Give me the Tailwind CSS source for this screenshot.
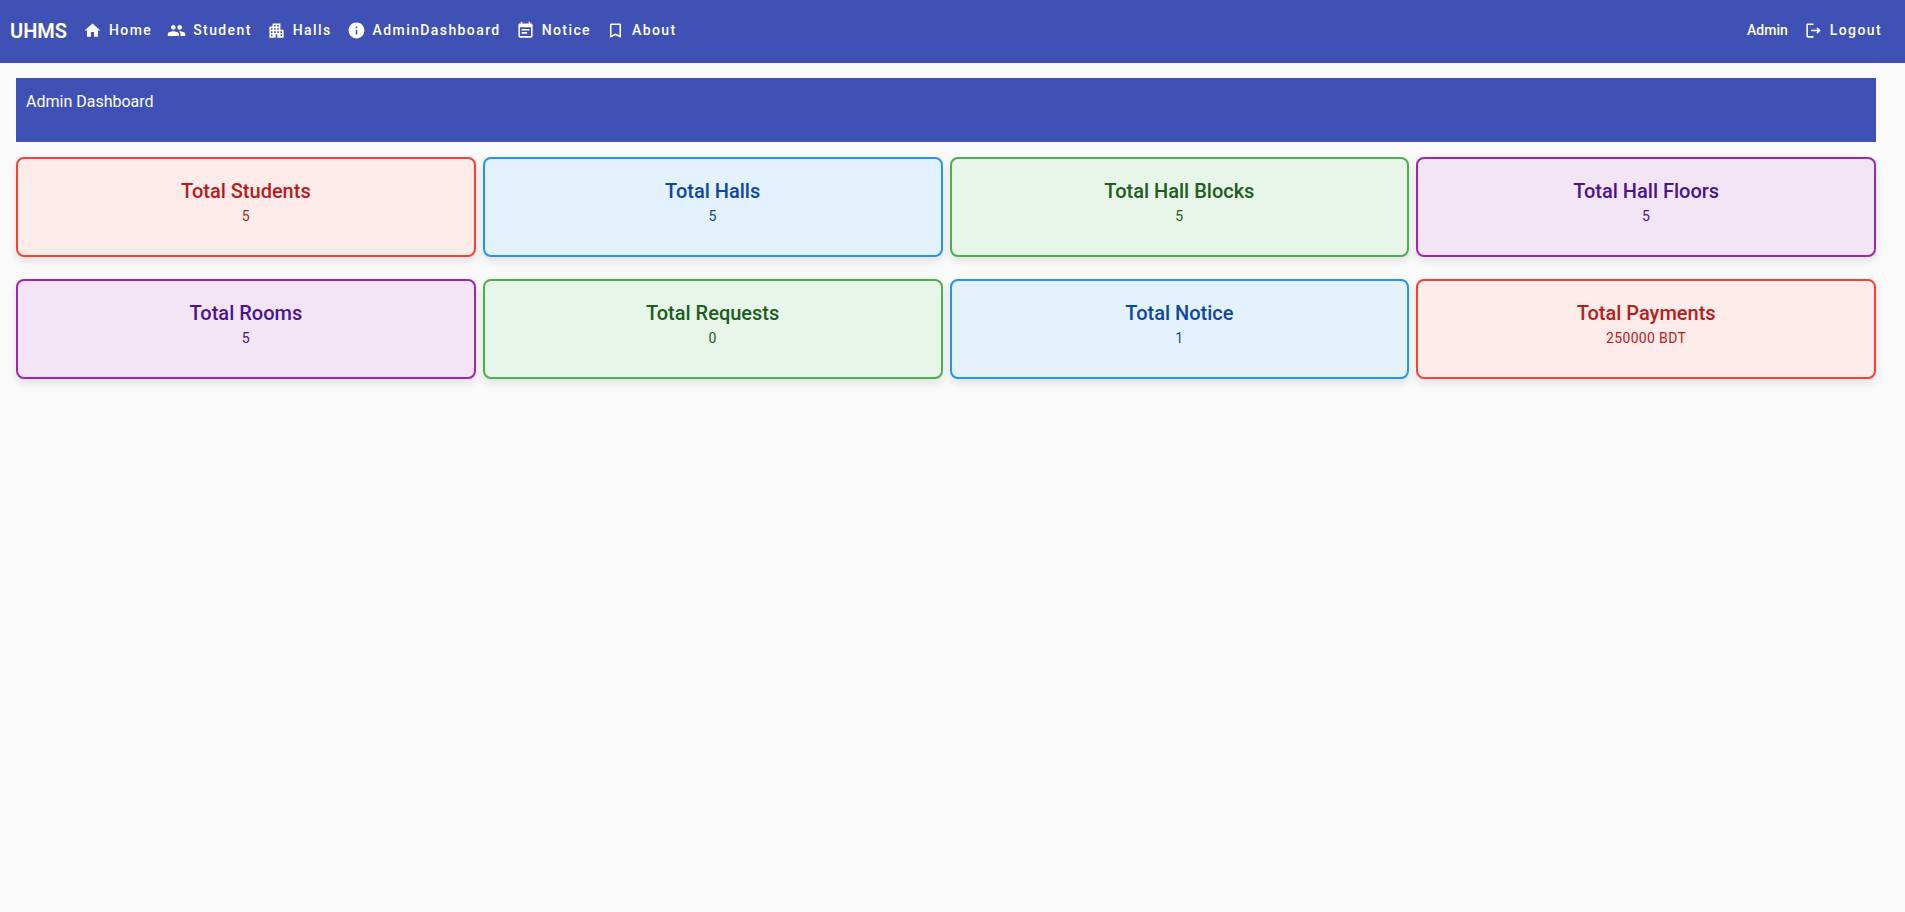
<!DOCTYPE html>
<html lang="en">
<head>
<meta charset="utf-8">
<meta name="viewport" content="width=device-width, initial-scale=1">
<title>UHMS - Admin Dashboard</title>
<script src="https://cdn.jsdelivr.net/npm/@tailwindcss/browser@4"></script>
</head>
<body class="min-h-screen bg-[#fafafa] font-[Roboto,sans-serif]">
<header class="flex min-h-[63px] flex-wrap items-center justify-between bg-[#3f51b5] pr-4 pb-0.5 pl-[10px] text-sm font-medium text-white">
  <div class="flex flex-wrap items-center">
    <a href="#" class="mr-2 text-xl font-semibold">UHMS</a>
    <nav class="flex flex-wrap items-center tracking-widest">
      <a href="#" class="flex items-center gap-[7px] pr-[7px] pl-2"><svg class="size-[19px] fill-current" viewBox="0 0 24 24" aria-hidden="true"><path d="M10 20v-6h4v6h5v-8h3L12 3 2 12h3v8z"/></svg><span class="pb-0.5">Home</span></a>
      <a href="#" class="flex items-center gap-[7px] pr-[7px] pl-2"><svg class="size-[19px] fill-current" viewBox="0 0 24 24" aria-hidden="true"><path d="M16 11c1.66 0 2.99-1.34 2.99-3S17.66 5 16 5c-1.66 0-3 1.34-3 3s1.34 3 3 3zm-8 0c1.66 0 2.99-1.34 2.99-3S9.66 5 8 5C6.34 5 5 6.34 5 8s1.34 3 3 3zm0 2c-2.33 0-7 1.17-7 3.5V19h14v-2.5c0-2.33-4.67-3.5-7-3.5zm8 0c-.29 0-.62.02-.97.05 1.16.84 1.97 1.97 1.97 3.45V19h6v-2.5c0-2.33-4.67-3.5-7-3.5z"/></svg><span class="pb-0.5">Student</span></a>
      <a href="#" class="flex items-center gap-[7px] pr-[7px] pl-2"><svg class="size-[19px] fill-current" viewBox="0 0 24 24" aria-hidden="true"><path d="M17 11V3H7v4H3v14h8v-4h2v4h8V11h-4zM7 19H5v-2h2v2zm0-4H5v-2h2v2zm0-4H5V9h2v2zm4 4H9v-2h2v2zm0-4H9V9h2v2zm0-4H9V5h2v2zm4 8h-2v-2h2v2zm0-4h-2V9h2v2zm0-4h-2V5h2v2zm4 12h-2v-2h2v2zm0-4h-2v-2h2v2z"/></svg><span class="pb-0.5">Halls</span></a>
      <a href="#" class="flex items-center gap-[7px] pr-[7px] pl-2"><svg class="size-[19px] fill-current" viewBox="0 0 24 24" aria-hidden="true"><path d="M12 2C6.48 2 2 6.48 2 12s4.48 10 10 10 10-4.48 10-10S17.52 2 12 2zm1 15h-2v-6h2v6zm0-8h-2V7h2v2z"/></svg><span class="pb-0.5">AdminDashboard</span></a>
      <a href="#" class="flex items-center gap-[7px] pr-[7px] pl-2"><svg class="size-[19px] fill-current" viewBox="0 0 24 24" aria-hidden="true"><path d="M17 10H7v2h10v-2zm2-7h-1V1h-2v2H8V1H6v2H5c-1.11 0-1.99.9-1.99 2L3 19c0 1.1.89 2 2 2h14c1.1 0 2-.9 2-2V5c0-1.1-.9-2-2-2zm0 16H5V8h14v11zm-5-5H7v2h7v-2z"/></svg><span class="pb-0.5">Notice</span></a>
      <a href="#" class="flex items-center gap-[7px] pr-[7px] pl-2"><svg class="size-[19px] fill-current" viewBox="0 0 24 24" aria-hidden="true"><path d="M17 3H7c-1.1 0-1.99.9-1.99 2L5 21l7-3 7 3V5c0-1.1-.9-2-2-2zm0 15l-5-2.18L7 18V5h10v13z"/></svg><span class="pb-0.5">About</span></a>
    </nav>
  </div>
  <div class="flex items-center">
    <span class="px-2 pb-0.5">Admin</span>
    <button type="button" class="flex items-center gap-[7px] pr-[7px] pl-2 tracking-widest"><svg class="size-[19px] fill-current" viewBox="0 0 24 24" aria-hidden="true"><path d="M17 8l-1.41 1.41L17.17 11H9v2h8.17l-1.58 1.58L17 16l4-4zM5 5h7V3H5c-1.1 0-2 .9-2 2v14c0 1.1.9 2 2 2h7v-2H5V5z"/></svg><span class="pb-0.5">Logout</span></button>
  </div>
</header>
<main class="mt-[15px] mr-[29px] ml-4">
  <h1 class="min-h-16 bg-[#3f51b5] px-[10px] py-3 text-base text-white">Admin Dashboard</h1>
  <div class="mt-[15px] grid grid-cols-1 gap-x-[7px] gap-y-[22px] text-center sm:grid-cols-2 lg:grid-cols-4">
    <section class="min-h-[100px] rounded-lg border-2 border-[#f44336] bg-[#feeceb] px-4 pt-4 text-[#b71c1c] shadow-[0_4px_8px_rgba(0,0,0,0.1)]"><h2 class="text-xl leading-8 font-medium">Total Students</h2><p class="text-sm leading-[18px] tracking-wide">5</p></section>
    <section class="min-h-[100px] rounded-lg border-2 border-[#2196f3] bg-[#e3f2fd] px-4 pt-4 text-[#0d47a1] shadow-[0_4px_8px_rgba(0,0,0,0.1)]"><h2 class="text-xl leading-8 font-medium">Total Halls</h2><p class="text-sm leading-[18px] tracking-wide">5</p></section>
    <section class="min-h-[100px] rounded-lg border-2 border-[#4caf50] bg-[#e8f5e9] px-4 pt-4 text-[#1b5e20] shadow-[0_4px_8px_rgba(0,0,0,0.1)]"><h2 class="text-xl leading-8 font-medium">Total Hall Blocks</h2><p class="text-sm leading-[18px] tracking-wide">5</p></section>
    <section class="min-h-[100px] rounded-lg border-2 border-[#9c27b0] bg-[#f3e5f5] px-4 pt-4 text-[#4a148c] shadow-[0_4px_8px_rgba(0,0,0,0.1)]"><h2 class="text-xl leading-8 font-medium">Total Hall Floors</h2><p class="text-sm leading-[18px] tracking-wide">5</p></section>
    <section class="min-h-[100px] rounded-lg border-2 border-[#9c27b0] bg-[#f3e5f5] px-4 pt-4 text-[#4a148c] shadow-[0_4px_8px_rgba(0,0,0,0.1)]"><h2 class="text-xl leading-8 font-medium">Total Rooms</h2><p class="text-sm leading-[18px] tracking-wide">5</p></section>
    <section class="min-h-[100px] rounded-lg border-2 border-[#4caf50] bg-[#e8f5e9] px-4 pt-4 text-[#1b5e20] shadow-[0_4px_8px_rgba(0,0,0,0.1)]"><h2 class="text-xl leading-8 font-medium">Total Requests</h2><p class="text-sm leading-[18px] tracking-wide">0</p></section>
    <section class="min-h-[100px] rounded-lg border-2 border-[#2196f3] bg-[#e3f2fd] px-4 pt-4 text-[#0d47a1] shadow-[0_4px_8px_rgba(0,0,0,0.1)]"><h2 class="text-xl leading-8 font-medium">Total Notice</h2><p class="text-sm leading-[18px] tracking-wide">1</p></section>
    <section class="min-h-[100px] rounded-lg border-2 border-[#f44336] bg-[#feeceb] px-4 pt-4 text-[#b71c1c] shadow-[0_4px_8px_rgba(0,0,0,0.1)]"><h2 class="text-xl leading-8 font-medium">Total Payments</h2><p class="text-sm leading-[18px] tracking-wide">250000 BDT</p></section>
  </div>
</main>
</body>
</html>
